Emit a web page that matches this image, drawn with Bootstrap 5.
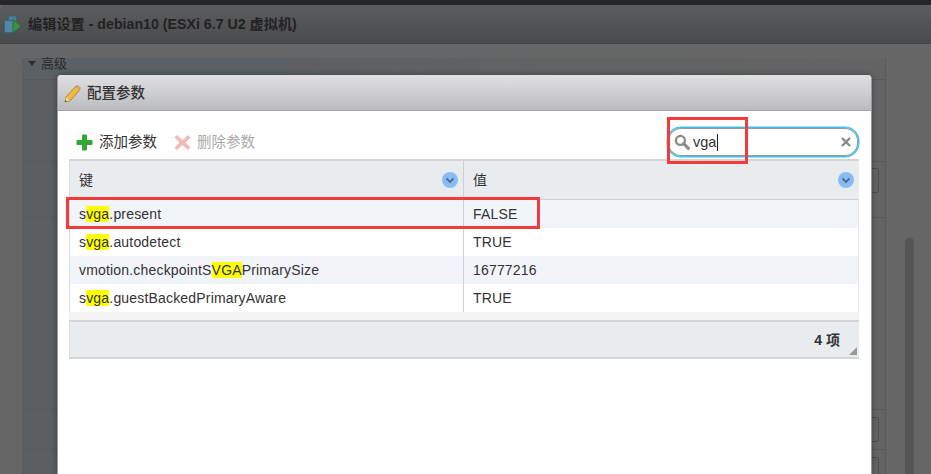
<!DOCTYPE html>
<html lang="zh">
<head>
<meta charset="utf-8">
<title>配置参数</title>
<link href="https://cdn.jsdelivr.net/npm/bootstrap@5.3.0/dist/css/bootstrap.min.css" rel="stylesheet">
<style>
html,body{width:931px;height:474px;overflow:hidden;margin:0;background:#666;}
body{font-family:"Liberation Sans","Noto Sans CJK SC",sans-serif;font-size:14px;color:#333;line-height:1;position:relative;}
.top-strip{height:5px;background:#262626;}
.win-head{height:39px;background:linear-gradient(#5b5c5e,#4b4c4e);border-bottom:1px solid #444;border-radius:5px 5px 0 0;padding:1px 0 0 4px;gap:6px;color:#222;font-weight:bold;font-size:14.2px;}
.win-body{height:430px;background:#666;padding:14px 45px 0 22px;}
.bg-panel{width:864px;height:100%;border-left:1px solid #5c5c5c;border-right:1px solid #5a5a5a;background:linear-gradient(90deg,#5b5f61 0,#5b5f61 4%,#646464 100%);}
.bg-panel-title{width:264px;height:21px;background:#5a6064;color:#2a2a2a;font-size:13px;padding:0 0 10px 5px;gap:5px;}
.tri{width:0;height:0;border-left:4px solid transparent;border-right:4px solid transparent;border-top:5px solid #2e2e2e;}
.bg-row{border-top:1px solid #595959;}
.r1{height:82px}.r2{height:56px}.r3{height:192px}.r4{height:40px}.r5{height:30px}
.bg-btn{position:absolute;width:8px;height:25px;border:1px solid #4d4d4d;border-left:0;border-radius:0 3px 3px 0;left:871px;}
.scroll-thumb{position:absolute;left:905px;top:238px;width:9px;height:236px;background:#555;border-radius:4px 4px 0 0;}
.cfg-dialog{position:absolute;left:57px;top:75px;width:815px;height:399px;background:#fff;border-radius:4px 4px 0 0;border-left:1px solid #9a9a9a;border-right:1px solid #9a9a9a;box-shadow:0 0 6px rgba(0,0,0,.35);}
.cfg-head{height:36px;background:linear-gradient(#e0e0e3,#bbbcbf);border-bottom:1px solid #a5a5a7;border-radius:4px 4px 0 0;padding:2px 0 0 6px;gap:5px;font-size:14.5px;color:#333;font-weight:500;}
.cfg-tools{height:48px;padding:16px 12px 0 18px;}
.tool-item{gap:6px;font-size:14.5px;color:#333;}
.tool-off{color:#aaa;margin-left:17px;}
.search-box{width:192px;height:30px;border:1px solid #3fc1ee;border-radius:14px;box-shadow:0 0 0 .5px #3fc1ee,inset 0 0 0 1px #999;padding:0 7px 0 6px;background:#fff;gap:3px;font-size:14.5px;}
.caret-bar{display:inline-block;width:1px;height:17px;background:#222;margin-left:1px;}
.grid-wrap{margin:0 12px 0 11px;}
.cfg-th{height:41px;background:#e9ecef;border-top:2px solid #d4d5d6;border-bottom:1px solid #cfd0d1;border-left:1px solid #d9dadb;}
.c-key{width:394px;padding:0 5px 0 9px;border-right:1px solid #cfd0d1;flex:none;}
.c-val{flex:1;padding:0 5px 0 9px;}
.cfg-tr{height:28px;letter-spacing:.18px;border-left:1px solid #d9dadb;border-right:1px solid #e9e9e9;}
.cfg-tr .c-key{height:100%;}
.tint{background:#f1f4f9;}
.hit{background:#ff0;}
.grid-gap{height:8px;background:#f3f3f3;}
.grid-foot{height:39px;background:#e9ecef;border-top:2px solid #d4d5d6;border-bottom:2px solid #d4d5d6;border-left:1px solid #d9dadb;padding-right:19px;font-weight:bold;font-size:14px;position:relative;}
.grip{position:absolute;right:2px;bottom:2px;}
.mark-box{position:absolute;border:3px solid #f43a3a;pointer-events:none;}
.mb1{left:667px;top:117px;width:81px;height:47px;}
.mb2{left:66px;top:197px;width:474px;height:32px;}
</style>
</head>
<body>
<div class="top-strip"></div>
<div class="win-head d-flex align-items-center">
  <svg width="18" height="20" viewBox="0 0 18 20"><rect x="4.500" y="1" width="8" height="7" fill="#4f7f96" stroke="#3c6378"/><rect x=".5" y="5.500" width="9" height="12" fill="#5089a6" stroke="#3c6378"/><path d="M9 4.500l8 6.500-8 7z" fill="#3f8f45" stroke="#2d6e33"/></svg>
  <span>编辑设置 - debian10 (ESXi 6.7 U2 虚拟机)</span>
</div>
<div class="win-body">
  <div class="bg-panel">
    <div class="bg-panel-title d-flex align-items-center"><span class="tri"></span><span>高级</span></div>
    <div class="bg-row r1"></div>
    <div class="bg-row r2"></div>
    <div class="bg-row r3"></div>
    <div class="bg-row r4"></div>
    <div class="bg-row r5"></div>
  </div>
</div>
<div class="bg-btn" style="top:168px"></div>
<div class="bg-btn" style="top:417px"></div>
<div class="bg-btn" style="top:457px"></div>
<div class="scroll-thumb"></div>

<div class="cfg-dialog">
  <div class="cfg-head d-flex align-items-center">
    <svg width="18" height="20" viewBox="0 0 18 20"><path d="M1 18l1-5L12 2l4 3.500L6 17z" fill="#f0b93a" stroke="#9c7a2a" stroke-width=".8"/><path d="M12 2l1.500-1.300 3.500 3-1 1.800z" fill="#d99a9a"/><path d="M1 18l1-5 3.500 3.500z" fill="#e8d9b0"/><path d="M1 18l.4-2 1.700 1.500z" fill="#444"/></svg>
    <span>配置参数</span>
  </div>
  <div class="cfg-tools d-flex justify-content-between">
    <div class="d-flex align-items-center" style="height:30px;">
      <div class="tool-item d-flex align-items-center">
        <svg width="17" height="17" viewBox="0 0 17 17"><path d="M6 1.500q0-1 1-1h3q1 0 1 1V6h4.500q1 0 1 1v3q0 1-1 1H11v4.500q0 1-1 1H7q-1 0-1-1V11H1.500q-1 0-1-1V7q0-1 1-1H6z" fill="#2fa836"/></svg>
        <span>添加参数</span>
      </div>
      <div class="tool-item tool-off d-flex align-items-center">
        <svg width="17" height="17" viewBox="0 0 17 17"><path d="M3 1l5.500 5L14 1l2.500 2.500-5 5 5 5L14 16l-5.500-5L3 16 .5 13.500l5-5-5-5z" fill="#f4b9b9"/></svg>
        <span>删除参数</span>
      </div>
    </div>
    <div class="search-box d-flex align-items-center">
      <svg width="16" height="16" viewBox="0 0 15 15"><circle cx="6" cy="6" r="4.200" fill="none" stroke="#8a8a8a" stroke-width="2.200"/><path d="M9 9l4.500 4.500" stroke="#8a8a8a" stroke-width="2.800" stroke-linecap="round"/></svg>
      <span class="flex-grow-1 d-flex align-items-center">vga<span class="caret-bar"></span></span>
      <svg width="10" height="10" viewBox="0 0 10 10"><path d="M1 1l8 8M9 1l-8 8" stroke="#8a8a8a" stroke-width="2.400"/></svg>
    </div>
  </div>
  <div class="grid-wrap">
    <div class="cfg-th d-flex">
      <div class="c-key d-flex align-items-center justify-content-between"><span>键</span>
        <svg width="16" height="16" viewBox="0 0 16 16"><circle cx="8" cy="8" r="8" fill="#86bdf5"/><path d="M4.500 6.500L8 10l3.500-3.500" fill="none" stroke="#4d6a8a" stroke-width="1.800"/></svg></div>
      <div class="c-val d-flex align-items-center justify-content-between"><span>值</span>
        <svg width="16" height="16" viewBox="0 0 16 16"><circle cx="8" cy="8" r="8" fill="#86bdf5"/><path d="M4.500 6.500L8 10l3.500-3.500" fill="none" stroke="#4d6a8a" stroke-width="1.800"/></svg></div>
    </div>
    <div class="cfg-tr tint d-flex align-items-center"><div class="c-key d-flex align-items-center"><span>s<span class="hit">vga</span>.present</span></div><div class="c-val">FALSE</div></div>
    <div class="cfg-tr d-flex align-items-center"><div class="c-key d-flex align-items-center"><span>s<span class="hit">vga</span>.autodetect</span></div><div class="c-val">TRUE</div></div>
    <div class="cfg-tr tint d-flex align-items-center"><div class="c-key d-flex align-items-center"><span>vmotion.checkpointS<span class="hit">VGA</span>PrimarySize</span></div><div class="c-val">16777216</div></div>
    <div class="cfg-tr d-flex align-items-center"><div class="c-key d-flex align-items-center"><span>s<span class="hit">vga</span>.guestBackedPrimaryAware</span></div><div class="c-val">TRUE</div></div>
    <div class="grid-gap"></div>
    <div class="grid-foot d-flex align-items-center justify-content-end">
      <span>4 项</span>
      <svg class="grip" width="8" height="8" viewBox="0 0 8 8"><path d="M8 0v8H0z" fill="#999"/></svg>
    </div>
  </div>
</div>
<div class="mark-box mb1"></div>
<div class="mark-box mb2"></div>
<script src="https://cdn.jsdelivr.net/npm/bootstrap@5.3.0/dist/js/bootstrap.bundle.min.js"></script>
</body>
</html>
